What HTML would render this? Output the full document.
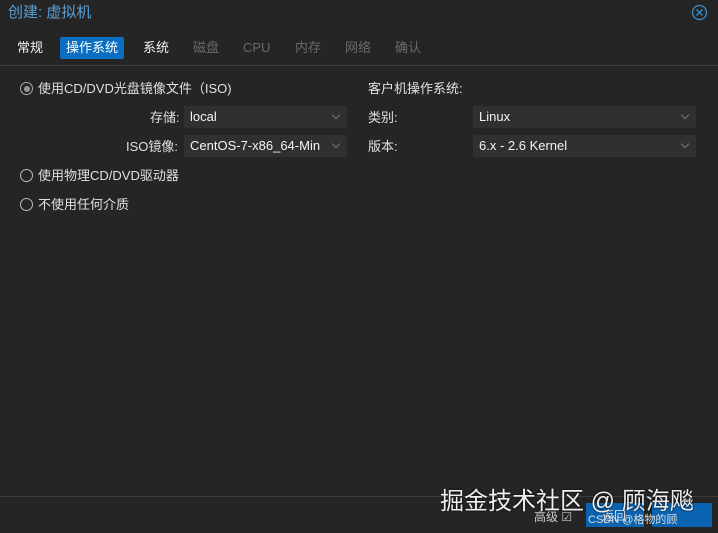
<!DOCTYPE html>
<html><head><meta charset="utf-8"><style>
body{margin:0;width:718px;height:533px;background:#252525;font-family:"Liberation Sans","Noto Sans CJK SC",sans-serif;color:#e0e0e0;font-size:13px;position:relative;overflow:hidden}
.a{position:absolute;white-space:nowrap;line-height:16px}
.title{left:8px;top:5px;color:#5a9fd4;font-size:15px}
.tab{top:37px;height:22px;line-height:22px;padding:0 6px;font-size:13px;color:#f2f2f2}
.sel{background:#0a6fc2;color:#fff;border-radius:2px}
.dis{color:#6a6a6a}
.f{background:#303030;height:22px;line-height:22px;padding-left:6px;box-sizing:border-box;font-size:13px;color:#f4f4f4}
.f:after{content:"";position:absolute;right:8px;top:6px;width:5px;height:5px;border-right:1px solid #777;border-bottom:1px solid #777;transform:rotate(45deg)}
.r{width:13px;height:13px;border:1px solid #bbb;border-radius:50%;box-sizing:border-box}
.line{left:0;width:718px;height:1px;background:#3c3c3c}
.btn{background:#0a63b0;height:24px;top:503px}
</style></head><body>
<div class="a title">创建: 虚拟机</div>
<svg class="a" style="left:691px;top:4px" width="17" height="17"><circle cx="8.5" cy="8.5" r="7" fill="none" stroke="#3a8fd0" stroke-width="1.3"/><path d="M5.5 5.5l6 6M11.5 5.5l-6 6" stroke="#3a8fd0" stroke-width="1.3"/></svg>
<div class="a tab" style="left:11px">常规</div>
<div class="a tab sel" style="left:60px">操作系统</div>
<div class="a tab" style="left:137px">系统</div>
<div class="a tab dis" style="left:187px">磁盘</div>
<div class="a tab dis" style="left:237px">CPU</div>
<div class="a tab dis" style="left:289px">内存</div>
<div class="a tab dis" style="left:339px">网络</div>
<div class="a tab dis" style="left:389px">确认</div>
<div class="a line" style="top:65px"></div>
<div class="a r" style="left:20px;top:82px;border-color:#aaa"><div style="position:absolute;left:2.5px;top:2.5px;width:6px;height:6px;border-radius:50%;background:#999"></div></div>
<div class="a" style="left:38px;top:81px">使用CD/DVD光盘镜像文件（ISO)</div>
<div class="a" style="left:150px;top:110px">存储:</div>
<div class="a f" style="left:184px;top:106px;width:163px">local</div>
<div class="a" style="left:126px;top:139px">ISO镜像:</div>
<div class="a f" style="left:184px;top:135px;width:163px;overflow:hidden;padding-right:22px">CentOS-7-x86_64-Min</div>
<div class="a r" style="left:20px;top:169px"></div>
<div class="a" style="left:38px;top:168px">使用物理CD/DVD驱动器</div>
<div class="a r" style="left:20px;top:198px"></div>
<div class="a" style="left:38px;top:197px">不使用任何介质</div>
<div class="a" style="left:368px;top:81px">客户机操作系统:</div>
<div class="a" style="left:368px;top:110px">类别:</div>
<div class="a f" style="left:473px;top:106px;width:223px">Linux</div>
<div class="a" style="left:368px;top:139px">版本:</div>
<div class="a f" style="left:473px;top:135px;width:223px">6.x - 2.6 Kernel</div>
<div class="a line" style="top:496px"></div>
<div class="a" style="left:534px;top:509px;font-size:12px;color:#ccc">高级 ☑</div>
<div class="a btn" style="left:586px;width:58px"></div>
<div class="a btn" style="left:652px;width:60px"></div>
<div class="a" style="left:602px;top:508px;font-size:12px;color:#ddd">返回</div>
<div class="a" style="left:588px;top:512px;font-size:11px;color:#ddd">CSDN @格物的顾</div>
<div class="a" style="left:440px;top:488px;font-size:24px;line-height:28px;color:#eee;text-shadow:0 0 2px #000">掘金技术社区 @ 顾海飚</div>
</body></html>
